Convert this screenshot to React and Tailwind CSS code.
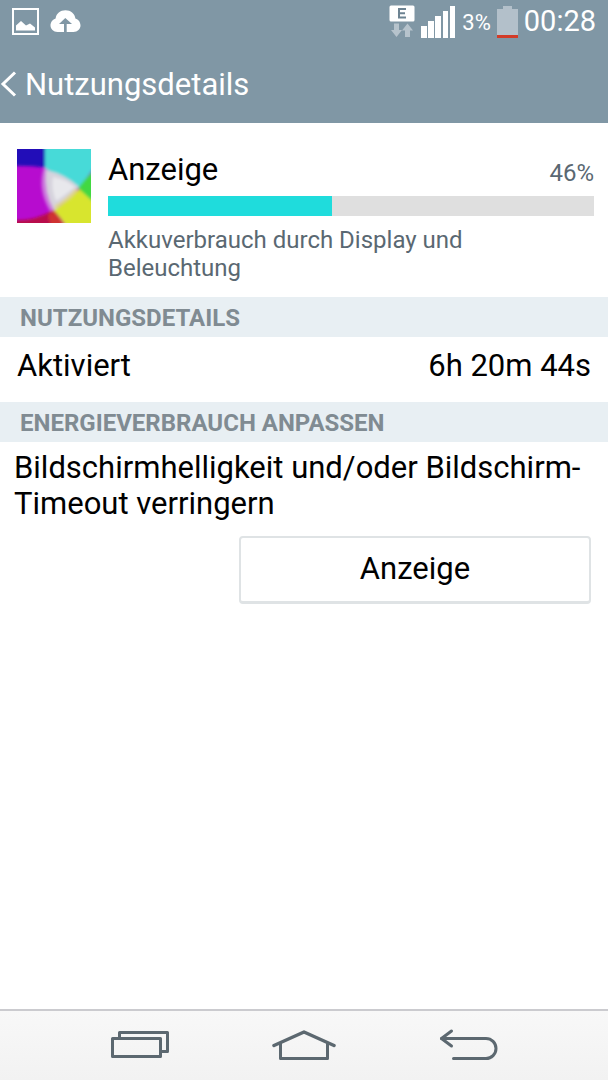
import React from "react";

// Status bar icons
function PictureIcon() {
  return (
    <svg width="28" height="28" viewBox="0 0 28 28" aria-hidden="true">
      <rect x="1" y="1" width="25" height="25" fill="none" stroke="#fff" strokeWidth="2" />
      <path d="M4 22.500V17.500L9 13L14 17.500L18 15.500L23 19.500V22.500Z" fill="#fff" />
    </svg>
  );
}

function CloudUploadIcon() {
  return (
    <svg width="31" height="24" viewBox="0 0 31 24" aria-hidden="true">
      <path
        d="M7.500 22C3.500 22 0.500 19 0.500 15.500C0.500 12 2.800 9.200 5.600 8.400C6.200 3.400 10.300 0.200 15.500 0.200C20.600 0.200 24.700 3.400 25.400 8.400C28.400 9.200 30.500 12 30.500 15.500C30.500 19 27.500 22 23.500 22H16.700V14H22L15.300 8L9 14H14V22Z"
        fill="#fff"
      />
    </svg>
  );
}

function NetworkIcon() {
  return (
    <svg width="26" height="34" viewBox="0 0 26 34" aria-hidden="true">
      <rect x="0.500" y="0.500" width="25" height="16" rx="1.500" fill="#fff" />
      <path d="M17 4H10V12.500H17M10 8.200H16" fill="none" stroke="#6d8392" strokeWidth="2" />
      <path d="M5 18.500H10V25H13L7.500 32L2 25H5Z" fill="#b6c3cc" />
      <path d="M16 32H21V25.500H24L18.500 18.500L13 25.500H16Z" fill="#b6c3cc" />
    </svg>
  );
}

function SignalIcon() {
  return (
    <svg width="35" height="32" viewBox="0 0 35 32" fill="#fff" aria-hidden="true">
      <rect x="0" y="20" width="6" height="12" />
      <rect x="7" y="15" width="6" height="17" />
      <rect x="14" y="10" width="6" height="22" />
      <rect x="22" y="5" width="5" height="27" />
      <rect x="29" y="0" width="5" height="32" />
    </svg>
  );
}

function BatteryIcon() {
  return (
    <svg width="21" height="32" viewBox="0 0 21 32" aria-hidden="true">
      <path d="M0 3H6V0H15V3H21V29H0Z" fill="#b3c0ca" />
      <rect x="0" y="29" width="21" height="3" fill="#d23b28" />
    </svg>
  );
}

// Overlapping colour spots, used as the display's app icon
function DisplayIcon() {
  return (
    <svg width="74" height="74" viewBox="0 0 74 74" className="shrink-0" aria-hidden="true">
      <defs>
        <clipPath id="tile">
          <rect width="74" height="74" />
        </clipPath>
        <filter id="soft" x="-20%" y="-20%" width="140%" height="140%">
          <feGaussianBlur stdDeviation="1.400" />
        </filter>
      </defs>
      <g clipPath="url(#tile)">
        <rect width="74" height="74" fill="#b70ccf" />
        <g filter="url(#soft)">
          <path d="M-10 -10H29V19Q14 16 -10 17Z" fill="#2109b8" />
          <path d="M28 -10H84V10Q73 24 62 39L28 20Z" fill="#46dad8" />
          <path d="M76 22Q68 30 61 39L68 47L84 60V22Z" fill="#43d842" />
          <path d="M62 40L84 60V84H52Q46 70 36 61Q52 52 62 40Z" fill="#d8e52f" />
          <path d="M-10 71Q18 73 36 61Q44 68 50 84H-10Z" fill="#b80c4c" />
          <path d="M36 61Q42 67 48 78H34L31 66Z" fill="#cf3030" />
          <path d="M27 18Q20 40 33 62L38 61Q30 40 34 23Z" fill="#cb78dc" />
          <path d="M29 21Q48 25 62 38Q50 52 37 61Q27 44 29 21Z" fill="#d6d3dd" />
          <path d="M38 59Q53 52 61 41L58 40Q48 51 37 57Z" fill="#e0d58c" />
          <path d="M36 28Q48 30 58 38Q48 46 39 52Q34 39 36 28Z" fill="#e8e8ec" />
        </g>
      </g>
    </svg>
  );
}

function StatusBar() {
  return (
    <div className="flex h-11 items-center justify-between px-3 text-white">
      <div className="flex items-center gap-2.5">
        <PictureIcon />
        <CloudUploadIcon />
      </div>
      <div className="flex items-center gap-1.5">
        <NetworkIcon />
        <SignalIcon />
        <span className="text-[22px]">3%</span>
        <BatteryIcon />
        <span className="text-[29px]">00:28</span>
      </div>
    </div>
  );
}

function SectionHeader({ children }) {
  return (
    <h2 className="flex h-10 items-center bg-[#e8eff3] px-5 pt-0.5 text-2xl font-bold text-[#808b92]">
      {children}
    </h2>
  );
}

function UsageSummary({ title, percent, description }) {
  return (
    <section className="flex gap-[17px] pt-[26px] pr-[14px] pb-[15px] pl-[17px]">
      <DisplayIcon />
      <div className="flex-1 pt-[3px]">
        <div className="flex items-end justify-between">
          <h3 className="text-[31px] leading-9">{title}</h3>
          <span className="text-2xl leading-[30px] text-[#5a6872]">{percent}%</span>
        </div>
        <div className="mt-2 h-5 bg-[#dfdfdf]">
          <div className="h-full bg-[#1fdcdc]" style={{ width: `${percent}%` }} />
        </div>
        <p className="mt-2.5 max-w-[400px] text-2xl leading-7 text-[#5a6872]">{description}</p>
      </div>
    </section>
  );
}

function NavigationBar() {
  return (
    <nav className="flex h-[71px] items-center justify-center gap-[100px] border-t-2 border-[#cbcbcf] bg-linear-to-b from-[#f8f8f8] to-[#f2f2f2] pb-0.5">
      <button type="button" aria-label="Letzte Apps">
        <svg width="64" height="34" viewBox="0 0 64 34" fill="none" stroke="#5c6870" strokeWidth="3" strokeLinejoin="round">
          <path d="M11.500 9V4.500H59.500V23.500H54" />
          <rect x="4.500" y="10.500" width="48" height="18" />
        </svg>
      </button>
      <button type="button" aria-label="Startseite">
        <svg width="64" height="34" viewBox="0 0 64 34" fill="none" stroke="#5c6870" strokeWidth="3" strokeLinejoin="round">
          <path d="M2 17.500L32 4L62 17.500" strokeWidth="3.500" strokeLinecap="round" />
          <path d="M8.500 15V30.500H55.500V15" />
        </svg>
      </button>
      <button type="button" aria-label="Zurück">
        <svg width="64" height="34" viewBox="0 0 64 34" fill="none" stroke="#5c6870" strokeWidth="3" strokeLinecap="round" strokeLinejoin="round">
          <path d="M15.500 3L5.500 10.500L15.500 18" />
          <path d="M5.500 10.500H50A10 10 0 0 1 50 30.500H17.500" />
        </svg>
      </button>
    </nav>
  );
}

export default function App() {
  return (
    <div className="flex min-h-screen flex-col bg-white font-['Roboto',sans-serif] text-black">
      <header className="bg-[#8097a5] pb-[9px]">
        <StatusBar />
        <button type="button" className="flex h-[70px] items-center gap-2 pt-3 text-white">
          <svg width="17" height="28" viewBox="0 0 17 28" fill="none" stroke="#fff" strokeWidth="3" aria-hidden="true">
            <path d="M15 1.500L3 13L15 24.500" />
          </svg>
          <span className="text-[31px]">Nutzungsdetails</span>
        </button>
      </header>

      <main className="flex-1">
        <UsageSummary
          title="Anzeige"
          percent={46}
          description="Akkuverbrauch durch Display und Beleuchtung"
        />

        <SectionHeader>NUTZUNGSDETAILS</SectionHeader>
        <div className="flex justify-between px-[17px] pt-[11px] pb-[18px] text-[31px] leading-9">
          <span>Aktiviert</span>
          <span>6h 20m 44s</span>
        </div>

        <SectionHeader>ENERGIEVERBRAUCH ANPASSEN</SectionHeader>
        <div className="pt-2 pr-[17px] pl-[14px]">
          <p className="text-[31px] leading-9">
            Bildschirmhelligkeit und/oder Bildschirm-Timeout verringern
          </p>
          <div className="mt-[14px] flex justify-end">
            <button
              type="button"
              className="h-[68px] w-[352px] rounded-sm border-2 border-b-3 border-[#dfe3e5] text-[31px]"
            >
              Anzeige
            </button>
          </div>
        </div>
      </main>

      <NavigationBar />
    </div>
  );
}
